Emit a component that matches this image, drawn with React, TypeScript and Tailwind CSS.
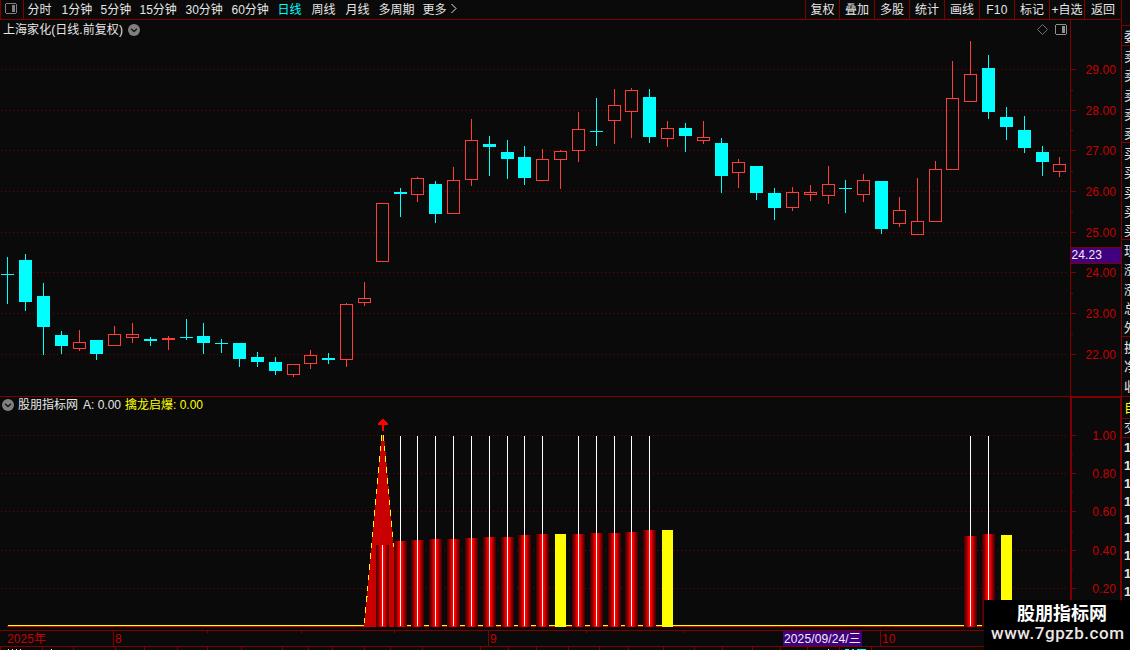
type Candle = [x: number, high: number, top: number, bottom: number, low: number, kind: "up" | "down"];

const candles: Candle[] = [
  [7, 257, 274, 275, 304, "down"],
  [25, 254, 260, 302, 311, "down"],
  [43, 283, 296, 327, 355, "down"],
  [61, 331, 335, 346, 354, "down"],
  [79, 330, 342, 349, 351, "up"],
  [96, 340, 340, 354, 360, "down"],
  [114, 326, 334, 346, 346, "up"],
  [132, 323, 334, 338, 343, "up"],
  [150, 337, 339, 341, 346, "down"],
  [168, 336, 338, 340, 350, "up"],
  [186, 319, 337, 338, 340, "down"],
  [203, 323, 336, 343, 354, "down"],
  [221, 339, 343, 344, 353, "down"],
  [239, 343, 343, 359, 367, "down"],
  [257, 352, 357, 362, 367, "down"],
  [275, 357, 362, 371, 375, "down"],
  [293, 364, 364, 375, 377, "up"],
  [310, 350, 355, 364, 369, "up"],
  [328, 353, 358, 360, 364, "down"],
  [346, 303, 304, 360, 367, "up"],
  [364, 282, 298, 303, 306, "up"],
  [382, 203, 203, 262, 262, "up"],
  [400, 188, 192, 194, 217, "down"],
  [417, 177, 178, 195, 202, "up"],
  [435, 181, 184, 214, 223, "down"],
  [453, 167, 180, 214, 214, "up"],
  [471, 119, 140, 180, 186, "up"],
  [489, 136, 144, 147, 176, "down"],
  [507, 140, 152, 159, 179, "down"],
  [524, 146, 157, 178, 185, "down"],
  [542, 149, 159, 181, 181, "up"],
  [560, 150, 151, 160, 189, "up"],
  [578, 112, 129, 151, 162, "up"],
  [596, 98, 131, 132, 146, "down"],
  [614, 89, 105, 121, 144, "up"],
  [631, 88, 90, 112, 138, "up"],
  [649, 89, 97, 137, 143, "down"],
  [667, 121, 128, 139, 147, "up"],
  [685, 123, 128, 136, 152, "down"],
  [703, 121, 137, 141, 144, "up"],
  [721, 138, 143, 176, 193, "down"],
  [738, 159, 162, 173, 188, "up"],
  [756, 166, 166, 193, 200, "down"],
  [774, 188, 193, 208, 220, "down"],
  [792, 187, 192, 208, 211, "up"],
  [810, 185, 192, 195, 201, "up"],
  [828, 166, 184, 196, 204, "up"],
  [845, 180, 188, 189, 213, "down"],
  [863, 174, 180, 195, 202, "up"],
  [881, 181, 181, 229, 234, "down"],
  [899, 197, 210, 224, 227, "up"],
  [917, 178, 221, 235, 235, "up"],
  [935, 161, 169, 222, 222, "up"],
  [952, 61, 98, 170, 170, "up"],
  [970, 41, 74, 102, 102, "up"],
  [988, 55, 68, 112, 119, "down"],
  [1006, 107, 117, 127, 140, "down"],
  [1024, 116, 130, 148, 153, "down"],
  [1042, 146, 152, 162, 176, "down"],
  [1059, 157, 164, 172, 177, "up"],
];

const priceTicks: [number, string][] = [
  [69, "29.00"],
  [110, "28.00"],
  [150, "27.00"],
  [191, "26.00"],
  [232, "25.00"],
  [272, "24.00"],
  [313, "23.00"],
  [354, "22.00"],
];
const priceMinor = [90, 130, 171, 212, 293, 334];

const indicatorTicks: [number, string][] = [
  [435, "1.00"],
  [473, "0.80"],
  [511, "0.60"],
  [550, "0.40"],
  [588, "0.20"],
];
const indicatorMinor = [454, 492, 531, 569];

const redBars: [number, number][] = [
  [382, 545],
  [400, 541],
  [417, 540],
  [435, 539],
  [453, 539],
  [471, 538],
  [489, 537],
  [507, 537],
  [524, 535],
  [542, 534],
  [578, 534],
  [596, 533],
  [614, 533],
  [631, 532],
  [649, 530],
  [970, 536],
  [988, 534],
];
const yellowBars: [number, number][] = [
  [555, 534],
  [662, 530],
  [1001, 535],
];

const periods = [
  { label: "分时", width: "w-[34px]" },
  { label: "1分钟", width: "w-[39px]" },
  { label: "5分钟", width: "w-[39px]" },
  { label: "15分钟", width: "w-[46px]" },
  { label: "30分钟", width: "w-[46px]" },
  { label: "60分钟", width: "w-[46px]" },
  { label: "日线", width: "w-[34px]", active: true },
  { label: "周线", width: "w-[34px]" },
  { label: "月线", width: "w-[33px]" },
  { label: "多周期", width: "w-[44px]" },
  { label: "更多", width: "w-[27px]" },
];

const tools = [
  { label: "复权", width: "w-[34px]" },
  { label: "叠加", width: "w-[35px]" },
  { label: "多股", width: "w-[35px]" },
  { label: "统计", width: "w-[35px]" },
  { label: "画线", width: "w-[35px]" },
  { label: "F10", width: "w-[35px] tracking-[0.3px]" },
  { label: "标记", width: "w-[35px]" },
  { label: "+自选", width: "w-[35px]" },
  { label: "返回", width: "w-[37px]" },
];

// Quote column; only its first few pixels are on screen.
const quoteGroups = [
  { rows: ["委"], height: "h-[20px]" },
  { rows: ["卖", "卖", "卖", "卖", "卖"], height: "h-[97px]" },
  { rows: ["买", "买", "买", "买", "买"], height: "h-[97px]" },
  { rows: ["现", "涨", "涨", "总", "外"], height: "h-[97px]" },
  { rows: ["换", "净", "收"], height: "h-[60px]" },
];

const footerTicks = [
  0, 42, 73, 115, 144, 177, 207, 241, 282, 308, 332, 364, 390, 422, 480, 508, 536, 568, 599, 628, 663, 694, 722, 752,
  780, 807, 839, 871,
];
const dateMinor = [207, 301, 394, 586, 684];

function PanelIcon({ color }: { color: string }) {
  return (
    <svg width="12" height="11" viewBox="0 0 12 11" shapeRendering="crispEdges" className="shrink-0">
      <path d="M1 0h10v1h1v9h-1v1H1v-1H0V1h1zM1 1v9h10V1z" fill={color} fillRule="evenodd" />
      <rect x="7" y="2" width="3" height="7" fill={color} />
    </svg>
  );
}

function ChevronBadge() {
  return (
    <svg width="12" height="12" viewBox="0 0 12 12" className="shrink-0">
      <circle cx="6" cy="6" r="6" fill="#808080" />
      <path d="M3 4.8 6 7.6 9 4.8" fill="none" stroke="#141414" strokeWidth="1.4" />
    </svg>
  );
}

function GridLine({ y }: { y: number }) {
  return <path d={`M1 ${y + 0.5}H1066`} stroke="#800000" strokeDasharray="1 3" />;
}

function AxisTick({ y, label }: { y: number; label: string }) {
  return (
    <>
      <rect x="1071" y={y} width="5" height="1" fill="#800000" />
      <text x="1116" y={y + 5} textAnchor="end" fontSize="12" letterSpacing="0.1" fill="#c80000">
        {label}
      </text>
    </>
  );
}

function CandleShape({ candle }: { candle: Candle }) {
  const [x, high, top, bottom, low, kind] = candle;
  if (kind === "down") {
    return (
      <g fill="#00ffff">
        <rect x={x} y={high} width="1" height={low - high} />
        <rect x={x - 6} y={top} width="13" height={bottom - top} />
      </g>
    );
  }
  return (
    <g fill="#ff3c3c">
      <rect x={x} y={high} width="1" height={top - high} />
      <rect x={x} y={bottom} width="1" height={low - bottom} />
      <rect x={x - 5.5} y={top + 0.5} width="12" height={bottom - top - 1} fill="none" stroke="#ff3c3c" />
    </g>
  );
}

function PriceChart() {
  return (
    <svg width="1121" height="376" viewBox="0 20 1121 376" shapeRendering="crispEdges" className="block">
      {priceTicks.map(([y]) => (
        <GridLine key={y} y={y} />
      ))}
      {candles.map((candle) => (
        <CandleShape key={candle[0]} candle={candle} />
      ))}
      <rect x="1070" y="20" width="1" height="376" fill="#800000" />
      {priceTicks.map(([y, label]) => (
        <AxisTick key={y} y={y} label={label} />
      ))}
      {priceMinor.map((y) => (
        <rect key={y} x="1071" y={y} width="2" height="1" fill="#800000" />
      ))}
      <rect x="1071" y="247" width="50" height="17" fill="#800000" />
      <rect x="1071" y="248" width="50" height="15" fill="#400080" />
      <text x="1071.5" y="259" fontSize="12" letterSpacing="0.1" fill="#f0f0f0">
        24.23
      </text>
    </svg>
  );
}

function IndicatorChart() {
  return (
    <svg width="1121" height="234" viewBox="0 396 1121 234" shapeRendering="crispEdges" className="block">
      <defs>
        <linearGradient id="bar">
          <stop offset="0" stopColor="#400000" />
          <stop offset="0.2" stopColor="#8c0000" />
          <stop offset="0.4" stopColor="#ff0000" />
          <stop offset="0.62" stopColor="#ff0000" />
          <stop offset="0.82" stopColor="#8c0000" />
          <stop offset="1" stopColor="#400000" />
        </linearGradient>
      </defs>
      <rect x="0" y="396" width="1121" height="1" fill="#800000" />
      {indicatorTicks.map(([y]) => (
        <GridLine key={y} y={y} />
      ))}
      <rect x="8" y="625" width="1051" height="1" fill="#ffff00" />
      <rect x="7" y="626" width="1052" height="1" fill="#d00000" />

      <polygon points="382,435 384,435 394,548 394,627 364,627" fill="#c80000" />
      <g fill="none" stroke="#ffff00" strokeWidth="1" strokeDasharray="5.6 5.2">
        <path d="M381.8 435 364.3 626" />
        <path d="M383.4 435 393.6 547" />
      </g>

      {redBars.map(([x, top]) => (
        <g key={x}>
          <rect x={x - 6} y={top} width="13" height={627 - top} fill="url(#bar)" />
          <rect x={x} y={x === 382 ? top : 436} width="1" height={x === 382 ? 626 - top : 190} fill="#ffffff" />
        </g>
      ))}
      {yellowBars.map(([x, top]) => (
        <rect key={x} x={x} y={top} width="11" height={627 - top} fill="#ffff00" />
      ))}
      <path d="M382 419h2v1h1v1h1v1h1v1h1v2h-4v6h-2v-6h-4v-2h1v-1h1v-1h1v-1h1z" fill="#ff0000" />

      <rect x="1070" y="396" width="51" height="2" fill="#800000" />
      <rect x="1070" y="396" width="2" height="234" fill="#800000" />
      <rect x="1120" y="396" width="1" height="234" fill="#800000" />
      {indicatorTicks.map(([y, label]) => (
        <AxisTick key={y} y={y} label={label} />
      ))}
      {indicatorMinor.map((y) => (
        <rect key={y} x="1071" y={y} width="2" height="1" fill="#800000" />
      ))}
    </svg>
  );
}

function Toolbar() {
  return (
    <div className="flex h-5 border-b border-[#800000] text-[#e6e6e6]">
      <div className="flex w-6 items-start border-x border-[#800000] pt-[3px] pl-1">
        <PanelIcon color="#808080" />
      </div>
      <div className="flex flex-1 pl-[3.5px] leading-[20px]">
        {periods.map((p) => (
          <span key={p.label} className={`${p.width} shrink-0 ${p.active ? "text-[#00ffff]" : ""}`}>
            {p.label}
          </span>
        ))}
        <svg width="8" height="11" viewBox="0 0 8 11" className="mt-[3px]">
          <path d="M1.5 1 6 5.5 1.5 10" fill="none" stroke="#e6e6e6" />
        </svg>
      </div>
      {tools.map((t) => (
        <div key={t.label} className={`${t.width} shrink-0 border-l border-[#800000] text-center leading-[20px]`}>
          {t.label}
        </div>
      ))}
    </div>
  );
}

function DateAxis() {
  return (
    <div className="relative flex h-[17px] border-y border-[#800000] leading-[16px] tracking-[0.1px] text-[#c80000]">
      <div className="w-[113px] pl-[7px]">2025年</div>
      <div className="w-[375px] border-l border-[#800000] pl-px">8</div>
      <div className="flex w-[392px] justify-end border-l border-[#800000] pr-[18px]">
        <span className="flex-1 pl-px">9</span>
        <span className="w-[79px] bg-[#400080] pl-px text-[#f0f0f0] tracking-[0.12px]">2025/09/24/三</span>
      </div>
      <div className="flex-1 border-l border-[#800000] pl-px">10</div>
      <svg width="1121" height="2" className="absolute left-0 top-0" shapeRendering="crispEdges">
        {dateMinor.map((x) => (
          <rect key={x} x={x} y="0" width="1" height="2" fill="#800000" />
        ))}
      </svg>
    </div>
  );
}

function QuoteColumn() {
  return (
    <div className="h-full w-[9px] overflow-hidden border-l border-[#800000] text-[#e6e6e6]">
      <div className="h-[26px] border-b border-[#800000]" />
      {quoteGroups.map((group, i) => (
        <div key={i} className={`${group.height} border-b border-[#800000] pl-[2px]`}>
          {group.rows.map((row, j) => (
            <div key={j} className="h-[19.3px] w-4 text-[13px] leading-[21px]">
              {row}
            </div>
          ))}
        </div>
      ))}
      <div className="h-[22px] w-6 border-b border-[#800000] pl-[2px] text-[13px] leading-[22px] text-[#ffff00]">自</div>
      <div className="h-[19px] w-6 border-b border-[#800000] pl-[2px] text-[13px] leading-[18px]">交</div>
      {Array.from({ length: 9 }, (_, i) => (
        <div key={i} className="h-[18px] w-6 pl-[2px] text-[13px] font-bold leading-[19px]">
          1
        </div>
      ))}
    </div>
  );
}

export default function App() {
  return (
    <div className="relative flex h-[650px] w-[1130px] overflow-hidden bg-[#0a0a0a] font-['Liberation_Sans','Noto_Sans_CJK_SC',sans-serif] text-[12px] whitespace-nowrap">
      <div className="flex w-[1121px] flex-col">
        <Toolbar />
        <div className="relative">
          <PriceChart />
          <div className="absolute inset-x-0 top-0 flex h-[19px] items-center pl-[3px] text-[#e6e6e6]">
            <span className="w-[125px] tracking-[0.05px]">上海家化(日线.前复权)</span>
            <ChevronBadge />
            <div className="ml-auto flex items-center gap-[7px] pr-[54px]">
              <svg width="11" height="11" viewBox="0 0 11 11">
                <path d="M5.5.5l5 5-5 5-5-5z" fill="none" stroke="#707070" />
              </svg>
              <PanelIcon color="#909090" />
            </div>
          </div>
        </div>
        <div className="relative">
          <IndicatorChart />
          <div className="absolute left-0 top-0 flex h-[18px] items-center pl-[2px] text-[#e6e6e6]">
            <ChevronBadge />
            <span className="ml-[4px] w-[65px]">股朋指标网</span>
            <span className="w-[42px]">A: 0.00</span>
            <span className="text-[#ffff00]">擒龙启爆: 0.00</span>
          </div>
        </div>
        <DateAxis />
        <svg width="1121" height="3" viewBox="0 647 1121 3" shapeRendering="crispEdges" className="block">
          {footerTicks.map((x) => (
            <rect key={x} x={x} y="647" width="1" height="3" fill="#800000" />
          ))}
          {[8, 12, 16, 20, 51, 828].map((x) => (
            <rect key={x} x={x} y="649" width="1" height="1" fill="#e6e6e6" />
          ))}
          <path d="M845 649.5h4m3 0h2m3 0h9" stroke="#00ffff" />
        </svg>
      </div>
      <QuoteColumn />

      <div className="absolute bottom-0 right-0 flex h-[50px] w-[146px] flex-col bg-black pt-[4px]">
        <div className="pl-[33px] text-[18px] font-bold leading-[21px] text-white">股朋指标网</div>
        <div className="pl-[7px] font-['Roboto',sans-serif] text-[17px] font-medium leading-[17px] tracking-[0.55px] text-[#eee6e6]">
          www.7gpzb.com
        </div>
      </div>
    </div>
  );
}
